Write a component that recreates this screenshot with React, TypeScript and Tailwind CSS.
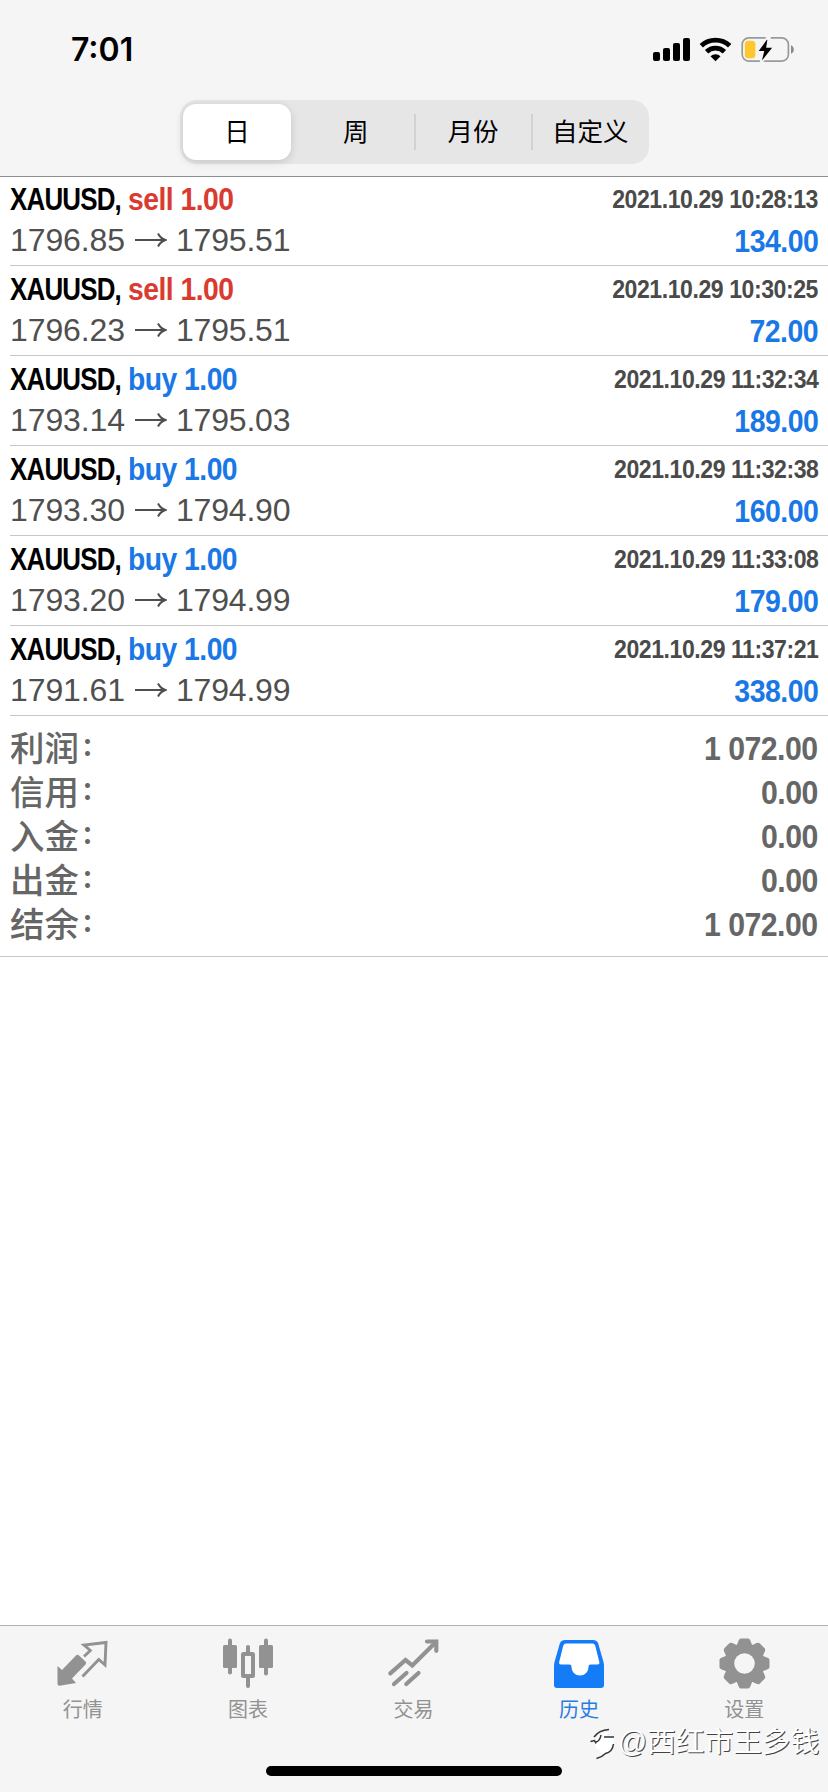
import React from 'react';

type Deal = { side: 'sell' | 'buy'; open: string; close: string; time: string; profit: string };

const deals: Deal[] = [
  { side: 'sell', open: '1796.85', close: '1795.51', time: '2021.10.29 10:28:13', profit: '134.00' },
  { side: 'sell', open: '1796.23', close: '1795.51', time: '2021.10.29 10:30:25', profit: '72.00' },
  { side: 'buy', open: '1793.14', close: '1795.03', time: '2021.10.29 11:32:34', profit: '189.00' },
  { side: 'buy', open: '1793.30', close: '1794.90', time: '2021.10.29 11:32:38', profit: '160.00' },
  { side: 'buy', open: '1793.20', close: '1794.99', time: '2021.10.29 11:33:08', profit: '179.00' },
  { side: 'buy', open: '1791.61', close: '1794.99', time: '2021.10.29 11:37:21', profit: '338.00' },
];

const totals: [string, string][] = [
  ['利润', '1 072.00'],
  ['信用', '0.00'],
  ['入金', '0.00'],
  ['出金', '0.00'],
  ['结余', '1 072.00'],
];

function StatusBar() {
  return (
    <div className="flex h-[100px] items-start justify-between pl-[71px] pr-[33px] pt-[34px]">
      <span className="font-['Inter',sans-serif] text-[32px] font-semibold leading-[32px]">7:01</span>
      <svg className="mt-[1px]" width="144" height="30" viewBox="651 35 144 30">
        <rect x="653" y="52" width="7" height="9" rx="2" />
        <rect x="663" y="48" width="7" height="13" rx="2" />
        <rect x="673" y="43" width="7" height="18" rx="2" />
        <rect x="683" y="38" width="7" height="23" rx="2" />
        <g fill="none" stroke="#000" strokeWidth="4.8">
          <path d="M701.3 45.8a20.5 20.5 0 0 1 28.4 0" />
          <path d="M706.6 51.8a12.8 12.8 0 0 1 17.8 0" />
        </g>
        <path d="M710.5 56.2a7.4 7.4 0 0 1 10 0L715.5 61.2z" />
        <rect x="742.2" y="37.9" width="46.2" height="23.2" rx="6.5" fill="none" stroke="#9a9a9a" strokeWidth="1.7" />
        <path d="M791 45.3c3.8 1.6 3.8 6.8 0 8.4z" fill="#8a8a8a" />
        <rect x="744.8" y="40.8" width="10.6" height="17.4" rx="3.5" fill="#fdc82f" />
        <path d="M767.5 37.500L758 51.200h5.600l-2.800 12 11.200-14.600h-5.500l3-11z" fill="#000" stroke="#f5f5f5" strokeWidth="2.600" />
        <path d="M767 39.5L758.7 51h5.6l-2.4 9.5 10.2-12.7h-5.9z" />
      </svg>
    </div>
  );
}

function Segments() {
  return (
    <div className="ml-[180px] grid h-[64px] w-[469px] grid-cols-4 rounded-[17px] bg-[#e6e6e7] text-[25.5px] leading-[64px]">
      <div className="py-[4px] pl-[3px] pr-[6px]">
        <div className="flex h-[56px] items-center justify-center rounded-[13px] bg-white shadow-[0_2px_8px_rgba(0,0,0,0.14)]">日</div>
      </div>
      <div className="flex items-center justify-center">周</div>
      <div className="relative flex items-center justify-center">
        <span className="absolute -left-px top-[14px] h-[36px] w-[2px] bg-[#d2d2d4]" />
        月份
      </div>
      <div className="relative flex items-center justify-center">
        <span className="absolute -left-px top-[14px] h-[36px] w-[2px] bg-[#d2d2d4]" />
        自定义
      </div>
    </div>
  );
}

function DealRow({ deal }: { deal: Deal }) {
  const tint = deal.side === 'sell' ? 'text-[#d93b30]' : 'text-[#1a78e6]';
  return (
    <li className="ml-[10px] h-[90px] border-b border-[#c6c6c8] pr-[10px] pt-[2px]">
      <div className="flex h-[42px] items-center justify-between whitespace-nowrap font-bold">
        <div className="flex text-[32px]">
          <span className="w-[118px] origin-left scale-x-[0.81] tracking-[-1px]">XAUUSD,</span>
          <span className={`origin-left scale-x-[0.885] tracking-[-0.6px] ${tint}`}>{deal.side} 1.00</span>
        </div>
        <span className="origin-right scale-x-[0.887] text-[26px] tracking-[-0.5px] text-[#4a4a4a]">{deal.time}</span>
      </div>
      <div className="flex h-[40px] items-center justify-between text-[32px] text-[#4f4f4f]">
        <div className="flex items-center">
          <span className="w-[125px] tracking-[-0.1px]">{deal.open}</span>
          <svg className="mr-[9px]" width="32" height="18" viewBox="0 0 32 18" fill="none" stroke="#4f4f4f" strokeWidth="2">
            <path d="M0 9h30M23 2.5c1.5 3 4 5.4 7.500 6.500c-3.500 1.100-6 3.500-7.500 6.500" />
          </svg>
          <span className="tracking-[-0.2px]">{deal.close}</span>
        </div>
        <span className="mt-px origin-right scale-x-[0.89] font-bold tracking-[-0.6px] text-[#1a78e6]">{deal.profit}</span>
      </div>
    </li>
  );
}

function QuotesIcon() {
  return (
    <svg width="52" height="52" viewBox="56.5 1637 52 52">
      <path d="M57 1666l4.500 4L75.500 1655.500q1.500-1.500 3 0L85 1661.500q1.300 1.500 0 3L71.500 1678.500l4 4.500L59 1685.700q-2 0-2-2z" fill="#929292" />
      <path d="M83.500 1656.500l6.300-6L83.500 1645l22-2.500L104.500 1665l-6.200-5.500L82 1676.500" fill="none" stroke="#929292" strokeWidth="2.900" />
    </svg>
  );
}

function ChartIcon() {
  return (
    <svg width="52" height="52" viewBox="222 1637 52 52" fill="#929292">
      <rect x="228" y="1638.500" width="4" height="36" rx="2" />
      <rect x="223" y="1645" width="14" height="23" rx="1.500" />
      <rect x="264" y="1638.500" width="4" height="37" rx="2" />
      <rect x="259" y="1645" width="14" height="23" rx="1.500" />
      <rect x="246" y="1645" width="4" height="9" rx="2" />
      <rect x="246" y="1676" width="4" height="12" rx="2" />
      <rect x="243" y="1654" width="10" height="22" fill="none" stroke="#929292" strokeWidth="4" rx=".5" />
    </svg>
  );
}

function TradeIcon() {
  return (
    <svg width="52" height="52" viewBox="387 1637 52 52" fill="none" stroke="#929292" strokeWidth="4.200" strokeLinecap="round">
      <path d="M390.300 1673.300L405.500 1660l6.800 5.500L436 1642" />
      <path d="M427 1641.500h9.300v9.300" />
      <path d="M394 1684L406.500 1673M406.300 1684L418.500 1673" />
    </svg>
  );
}

function HistoryIcon() {
  return (
    <svg width="52" height="52" viewBox="552 1637 52 52">
      <path fill="#157cf8" d="M564 1640h28q4 0 5.200 3.500L602.500 1662q.5 2 .5 4v19q0 3-3 3H556q-3 0-3-3v-19q0-2 .5-4L558.800 1643.500Q560 1640 564 1640z" />
      <path fill="#fff" d="M565 1643.500h26.500q2 0 2.700 2L598.300 1662q.4 2.500-1.800 2.500h-7q-2 0-2 2c0 12-17 12-17 0q0-2-2-2h-8.500q-2.200 0-1.800-2.500L562.300 1645.500q.7-2 2.700-2z" />
    </svg>
  );
}

function SettingsIcon() {
  return (
    <svg width="52" height="52" viewBox="-26.5 -26.5 52 52" fill="#929292">
      <circle r="20" />
      {[0, 45, 90, 135, 180, 225, 270, 315].map((angle) => (
        <path key={angle} transform={`rotate(${angle})`} d="M-8.500-17.500C-6.500-19-6.500-25-3.500-25h7C6.500-25 6.500-19 8.500-17.500z" />
      ))}
      <circle r="10.300" fill="#f5f5f5" />
    </svg>
  );
}

const tabs = [
  { label: '行情', Icon: QuotesIcon },
  { label: '图表', Icon: ChartIcon },
  { label: '交易', Icon: TradeIcon },
  { label: '历史', Icon: HistoryIcon, active: true },
  { label: '设置', Icon: SettingsIcon },
];

export default function App() {
  return (
    <div className="relative flex h-[1792px] w-[828px] flex-col overflow-hidden bg-white font-['Liberation_Sans','Noto_Sans_CJK_SC',sans-serif] text-black">
      <header className="h-[177px] shrink-0 border-b border-[#8f8f91] bg-[#f5f5f5]">
        <StatusBar />
        <Segments />
      </header>
      <main className="flex-1">
        <ul className="-mt-px">
          {deals.map((deal) => (
            <DealRow key={deal.time} deal={deal} />
          ))}
        </ul>
        <dl className="h-[241px] border-b border-[#c6c6c8] px-[10px] pt-[10px] font-bold text-[#666]">
          {totals.map(([label, value]) => (
            <div key={label} className="flex h-[44px] items-center justify-between">
              <dt className="flex pt-px text-[34.5px] font-medium leading-[44px]">
                {label}
                <span className="-mt-[2px] ml-[2px] text-[26px] font-bold">：</span>
              </dt>
              <dd className="origin-right scale-x-[0.89] text-[34px] leading-[44px] tracking-[-0.6px]">{value}</dd>
            </div>
          ))}
        </dl>
      </main>
      <footer className="flex h-[167px] shrink-0 flex-col items-center border-t border-[#b2b2b2] bg-[#f5f5f5]">
        <nav className="grid h-[140px] w-full grid-cols-5 pr-px pt-[11px]">
          {tabs.map(({ label, Icon, active }) => (
            <div key={label} className={`flex flex-col items-center text-[20px] leading-[30px] ${active ? 'text-[#2a7de0]' : 'text-[#929292]'}`}>
              <Icon />
              <span className="mt-[6px]">{label}</span>
            </div>
          ))}
        </nav>
        <div className="h-[10px] w-[296px] rounded-full bg-black" />
      </footer>
      <div className="absolute left-[588px] top-[1722px] flex items-center whitespace-nowrap text-[28.7px] leading-[40px] text-white [text-shadow:1px_1px_0_#444]">
        <svg className="mt-[4px]" width="30" height="36" viewBox="588 1728 30 36" fill="none">
          <path d="M596 1743q3-8 13-9l-4 5h9q3 14-12 17l-2-3q-7-3-4-10z" fill="#fff" />
          <path d="M594 1739q5-7 15-7.500M590.500 1743.500l4-1 1.500 3M596 1744q4-1 5-7M604 1739h10M613.500 1746q-1 8-8 9.500-4 4-9 5" stroke="#333" strokeWidth="1.500" />
        </svg>
        <span>@西红市王多钱</span>
      </div>
    </div>
  );
}
